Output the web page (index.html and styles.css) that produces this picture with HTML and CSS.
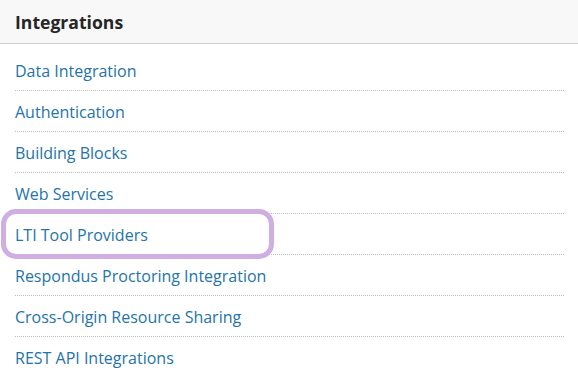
FILE: index.html
```html
<!DOCTYPE HTML>
<html>
<head>
    <title>Integrations</title>
    <meta charset="utf-8">
    <link rel="stylesheet" href="styles.css">
</head>
<body>
    <div class="panel">
      <div class="panel-header">Integrations</div>
      <ul class="link-list">
        <li><a href="#">Data Integration</a></li>
        <li><a href="#">Authentication</a></li>
        <li><a href="#">Building Blocks</a></li>
        <li><a href="#">Web Services</a></li>
        <li class="marked"><a href="#">LTI Tool Providers</a><span class="ring"></span></li>
        <li><a href="#">Respondus Proctoring Integration</a></li>
        <li><a href="#">Cross-Origin Resource Sharing</a></li>
        <li><a href="#">REST API Integrations</a></li>
      </ul>
    </div>
</body>
</html>
```

FILE: styles.css
```css
* {box-sizing: border-box;}

body {
  margin: 0;
  font-family: "Open Sans", Arial, sans-serif;
  background: #fff;
}

.panel-header {
  height: 44px;
  padding: 0 15px;
  background-color: #f8f8f8;
  border-bottom: 1px solid #cdcdcd;
  font-size: 17.6px;
  font-weight: bold;
  color: #262626;
  line-height: 44px;
}

.link-list {
  list-style: none;
  margin: 0;
  padding: 6px 14px 0 15px;
}

.link-list li {
  position: relative;
  height: 41px;
  padding-top: 1px;
  line-height: 40px;
  border-bottom: 1px dotted #bdbdbd;
}

.link-list li:last-child {
  border-bottom: none;
}

.link-list a {
  color: #2574a9;
  font-size: 16px;
  text-decoration: none;
}

.ring {
  position: absolute;
  left: -14px;
  top: -5px;
  width: 273px;
  height: 50px;
  border: 5px solid #cfaee3;
  border-radius: 15px;
}
```
